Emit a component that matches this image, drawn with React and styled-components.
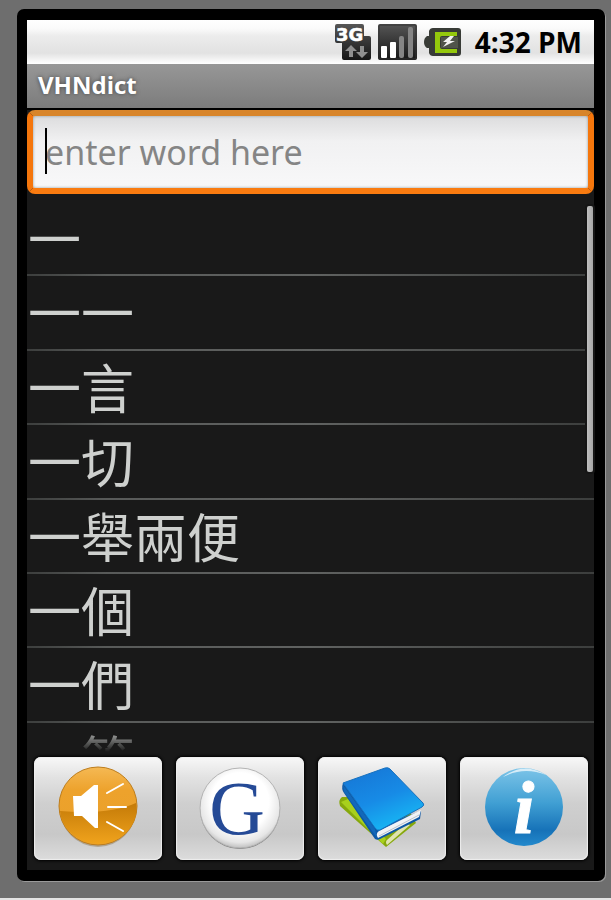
import React from "react";
import styled, { createGlobalStyle } from "styled-components";

const GlobalStyle = createGlobalStyle`
	* {
		box-sizing: border-box;
	}

	body {
		margin: 0;
		background: #fff;
		font-family: "Noto Sans", "Noto Sans CJK TC", sans-serif;
	}
`

const Page = styled.div`
	padding: 9px 6px 17px 17px;
	background: #6e6e6e;
	border-bottom: 2px solid #e4e4e4;
`

const Frame = styled.main`
	padding: 11px 11px 11px 10px;
	background: #000;
	border-radius: 7px;
	box-shadow: 1px 1px 0 #9a9a9a;
`

const Screen = styled.div`
	background: #191919;
`

const StatusBar = styled.header`
	display: flex;
	align-items: center;
	justify-content: flex-end;
	gap: 6px;
	height: 44px;
	padding-right: 12px;
	background: linear-gradient(#fff 0%, #fafafa 20%, #ececec 36%, #e2e2e2 75%, #f4f4f4 90%, #fff 100%);

	svg {
		display: block;
		flex: none;
	}
`

const Clock = styled.time`
	margin-left: 8px;
	color: #000;
	font-family: "Open Sans", sans-serif;
	font-size: 28px;
	font-weight: 700;
	line-height: 44px;
`

const TitleBar = styled.h1`
	height: 44px;
	margin: 0;
	padding-left: 11px;
	background: linear-gradient(#979797, #7c7c7c);
	color: #fff;
	font-family: "Open Sans", sans-serif;
	font-size: 24px;
	font-weight: 700;
	line-height: 42px;
	text-shadow: 0 0 4px #444;
`

const SearchBox = styled.label`
	display: block;
	position: relative;
	height: 86px;
	border-top: 2px solid #000;
`

const SearchInput = styled.input`
	display: block;
	width: 100%;
	height: 84px;
	padding: 0 12px;
	border: 6px solid;
	border-color: #d8852a #f5760c #f97b10 #f5760c;
	border-radius: 8px;
	outline: none;
	background: linear-gradient(#dcdcdd, #f1f1f2 35%, #f8f8f9);
	box-shadow: inset 0 0 3px #8f9a9c;
	color: #000;
	font-family: "Noto Sans", sans-serif;
	font-size: 34px;

	&::placeholder {
		color: #858585;
		opacity: 1;
	}
`

const Caret = styled.span`
	position: absolute;
	top: 18px;
	left: 18px;
	width: 2px;
	height: 46px;
	background: #000;
`

const ListArea = styled.div`
	position: relative;
	height: 558px;
	padding-top: 8px;
`

const ListWindow = styled.div`
	height: 550px;
	overflow: hidden;
	mask-image: linear-gradient(#000 525px, transparent 550px);
`

const WordList = styled.ul`
	display: grid;
	grid-auto-rows: 1fr;
	height: 595px;
	margin: 0;
	padding: 0;
	list-style: none;
`

const Word = styled.li`
	padding-left: 1px;
	border-bottom: 2px solid;
	border-image: linear-gradient(90deg, #3c3e3d, #585a59 80px, #606261 50%, #3c3e3d) 1;
	color: #ced0ce;
	font-family: "Noto Sans CJK TC", sans-serif;
	font-size: 53px;
	line-height: 70px;
	white-space: nowrap;
`

const ScrollThumb = styled.div`
	position: absolute;
	top: 12px;
	right: 1px;
	width: 6px;
	height: 266px;
	border-radius: 2px;
	background: linear-gradient(90deg, #c0c0c0, #a4a4a4);
	box-shadow: 0 0 0 2px #151515;
`

const Toolbar = styled.nav`
	display: grid;
	grid-template-columns: repeat(4, 1fr);
	gap: 14px;
	padding: 5px 7px 10px;
`

const ToolButton = styled.button`
	display: flex;
	justify-content: center;
	height: 103px;
	padding: 0;
	border: 0;
	border-radius: 7px;
	background: linear-gradient(#f8f8f8, #e2e2e2 20%, #cfcfcf 45%, #c8c8c8 75%, #dcdcdc);
	box-shadow: inset 0 0 1px 1px #eee, 0 0 3px 1px #000;

	svg {
		display: block;
		flex: none;
	}
`

const words = ["一", "一一", "一言", "一切", "一舉兩便", "一個", "一們", "一等"];

const NetworkIcon = () => (
	<svg width="37" height="36" viewBox="0 0 37 36" aria-hidden="true">
		<defs>
			<linearGradient id="dark" x1="0" y1="0" x2="0" y2="1">
				<stop offset="0" stopColor="#565656" />
				<stop offset="1" stopColor="#161616" />
			</linearGradient>
		</defs>
		<path d="M2 0H27Q29 0 29 2V12H34Q36 12 36 14V34Q36 36 34 36H9Q7 36 7 34V19H2Q0 19 0 17V2Q0 0 2 0Z" fill="url(#dark)" />
		<text x="1" y="17" fill="#fff" stroke="#fff" strokeWidth=".5" fontFamily="DejaVu Sans" fontWeight="700" fontSize="18">3G</text>
		<path d="M16 21L22 27H18V33H14V27H10Z" fill="#8f8f8f" />
		<path d="M25 22H29V28H33L27 34L21 28H25Z" fill="#8f8f8f" />
	</svg>
)

const SignalIcon = () => (
	<svg width="40" height="36" viewBox="0 0 40 36" aria-hidden="true">
		<rect width="39" height="36" rx="2" fill="url(#dark)" />
		<rect x="1" y="1" width="37" height="34" rx="1" fill="none" stroke="#333" />
		<rect x="3" y="22" width="6" height="12" rx="1" fill="#fff" />
		<rect x="12" y="18" width="6" height="16" rx="1" fill="#fff" />
		<rect x="21" y="12" width="5" height="22" rx="2" fill="#858585" />
		<rect x="30" y="3" width="5" height="31" rx="2" fill="#858585" />
	</svg>
)

const BatteryIcon = () => (
	<svg width="37" height="28" viewBox="0 0 37 28" aria-hidden="true">
		<path d="M9 0H34Q37 0 37 3V25Q37 28 34 28H9Q6 28 5 25V20H3Q0 18 0 14Q0 10 3 8H5V3Q6 0 9 0Z" fill="#383b36" />
		<path d="M11 4H33V8H18Q16 8 16 10V19Q16 21 18 21H33V25H11Z" fill="#94c80c" />
		<path d="M17 9H34V20H17Z" fill="#50544a" />
		<path d="M26 8L19 14H23L19 19L31 13H26L30 8Z" fill="#f2f2f2" />
	</svg>
)

const SoundIcon = () => (
	<svg width="128" height="103" viewBox="0 0 128 103" aria-hidden="true">
		<defs>
			<linearGradient id="orange" x1="0" y1="0" x2="0" y2="1">
				<stop offset="0" stopColor="#f5b954" />
				<stop offset=".3" stopColor="#eda22c" />
				<stop offset="1" stopColor="#e9a02a" />
			</linearGradient>
			<linearGradient id="orangeLow" x1="0" y1="0" x2="0" y2="1">
				<stop offset="0" stopColor="#c47a08" />
				<stop offset="1" stopColor="#f0a31c" />
			</linearGradient>
		</defs>
		<ellipse cx="64" cy="52" rx="38" ry="38" fill="#8d7a58" opacity=".5" />
		<circle cx="64" cy="49" r="39" fill="url(#orange)" stroke="#bd7d1c" />
		<path d="M26 54Q75 58 102 46Q105 62 92 76Q80 87 64 87Q48 87 36 75Q27 66 26 54Z" fill="url(#orangeLow)" />
		<path d="M39 39H47L60 28H64V71H61L48 59H40Z" fill="#fff" />
		<path d="M73 36L89 27M74 50H92M73 65L89 74" stroke="#fff" strokeWidth="2" strokeLinecap="round" />
	</svg>
)

const GoogleIcon = () => (
	<svg width="128" height="103" viewBox="0 0 128 103" aria-hidden="true">
		<defs>
			<radialGradient id="ball" cx=".5" cy=".42" r=".6">
				<stop offset=".6" stopColor="#fff" />
				<stop offset=".85" stopColor="#e6e6e6" />
				<stop offset="1" stopColor="#b5b5b5" />
			</radialGradient>
		</defs>
		<circle cx="64" cy="52" r="40" fill="#7d7d7d" />
		<circle cx="64" cy="51" r="40" fill="url(#ball)" stroke="#b4b4b4" />
		<text x="61" y="77" textAnchor="middle" fill="#254a96" fontFamily="Liberation Serif" fontSize="77">G</text>
	</svg>
)

const BooksIcon = () => (
	<svg width="128" height="103" viewBox="0 0 128 103" aria-hidden="true">
		<defs>
			<linearGradient id="cover" x1=".2" y1="0" x2=".7" y2="1">
				<stop offset="0" stopColor="#1677d6" />
				<stop offset=".5" stopColor="#178be6" />
				<stop offset="1" stopColor="#17bdf6" />
			</linearGradient>
		</defs>
		<path d="M24 40Q20 43 22 49L68 90L98 66L90 52L40 40Z" fill="#86a80c" />
		<path d="M23 45L30 42L68 82L65 87Z" fill="#a8d01c" />
		<path d="M69 83Q67 85 69 88L92 68L88 66Z" fill="#dfe4b0" />
		<path d="M25 26Q23 32 26 36L57 82Q60 84 64 81L102 62L103 54L60 70Z" fill="#0d58a6" />
		<path d="M61 74Q57 77 60 81L101 60Q102 57 103 53Z" fill="#f1f3f6" />
		<path d="M61 79L101 58" stroke="#b9c2cb" />
		<path d="M25 26L67 11Q70 10 72 12L105 46Q107 48 104 50L62 73Q59 74 57 71Z" fill="url(#cover)" stroke="#1670be" />
		<path d="M25 28L57 72L59 81L26 35Z" fill="#1268ba" />
	</svg>
)

const InfoIcon = () => (
	<svg width="128" height="103" viewBox="0 0 128 103" aria-hidden="true">
		<defs>
			<linearGradient id="blue" x1="0" y1="0" x2="0" y2="1">
				<stop offset="0" stopColor="#7cc4e8" />
				<stop offset=".45" stopColor="#409fd3" />
				<stop offset=".8" stopColor="#1672b8" />
				<stop offset="1" stopColor="#2389cc" />
			</linearGradient>
		</defs>
		<circle cx="64" cy="50" r="39" fill="url(#blue)" />
		<path d="M43 20Q64 4 86 18Q64 9 43 20Z" fill="#fff" opacity=".7" />
		<text x="64" y="76" textAnchor="middle" fill="#fff" stroke="#fff" strokeWidth="1" fontFamily="Liberation Serif" fontStyle="italic" fontWeight="700" fontSize="74">i</text>
	</svg>
)

const tools = [
	{ label: "Pronounce", Icon: SoundIcon },
	{ label: "Google", Icon: GoogleIcon },
	{ label: "Dictionaries", Icon: BooksIcon },
	{ label: "About", Icon: InfoIcon },
];

class App extends React.Component {
	render() {
		return (
			<Page>
				<GlobalStyle />
				<Frame>
					<Screen>
						<StatusBar>
							<NetworkIcon />
							<SignalIcon />
							<BatteryIcon />
							<Clock>4:32 PM</Clock>
						</StatusBar>
						<TitleBar>VHNdict</TitleBar>
						<SearchBox>
							<SearchInput type="text" placeholder="enter word here" aria-label="enter word here" />
							<Caret />
						</SearchBox>
						<ListArea>
							<ListWindow>
								<WordList>
									{words.map(word => <Word key={word}>{word}</Word>)}
								</WordList>
							</ListWindow>
							<ScrollThumb />
						</ListArea>
						<Toolbar>
							{tools.map(({ label, Icon }) => (
								<ToolButton key={label} type="button" aria-label={label}>
									<Icon />
								</ToolButton>
							))}
						</Toolbar>
					</Screen>
				</Frame>
			</Page>
		);
	}
}

export default App;
